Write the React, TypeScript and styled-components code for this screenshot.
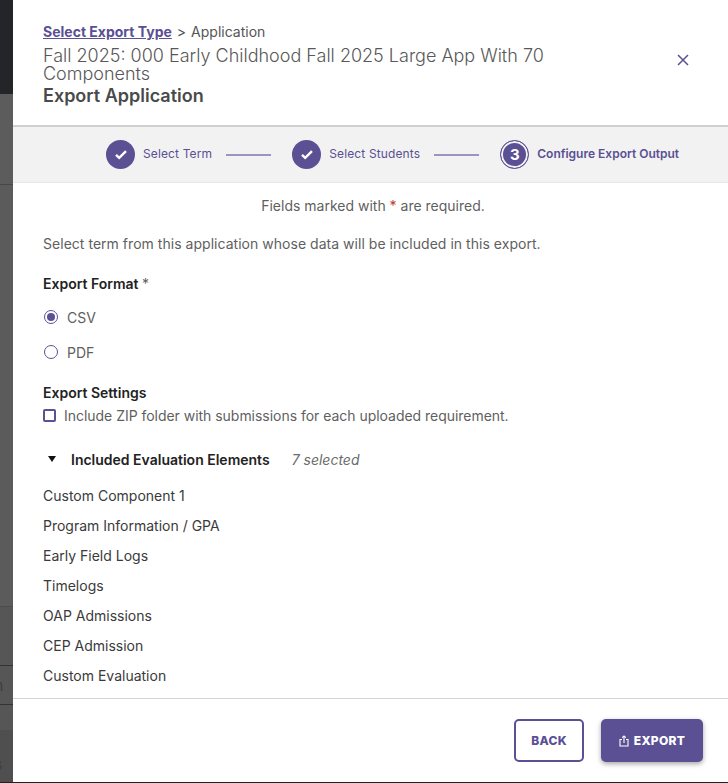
import React from "react";
import styled, { createGlobalStyle } from "styled-components";

const Global = createGlobalStyle`
  html, body { margin: 0; padding: 0; background: #fff; }
  body { font-family: Inter, "Liberation Sans", sans-serif; }
  * { box-sizing: border-box; }
`;
const purple = "#5a5093";
const grey = "#5f5f5f";

const Page = styled.div`
  display: flex; width: 728px; height: 783px; overflow: hidden;
`;
const Strip = styled.div`
  width: 13px; flex: none; display: flex; flex-direction: column; overflow: hidden;
`;
const StripBand = styled.div<{ $h: number; $bg: string; $line?: string; $pad?: number }>`
  height: ${(p) => p.$h}px; flex: none; background: ${(p) => p.$bg};
  border-bottom: ${(p) => (p.$line ? `1px solid ${p.$line}` : "none")};
  padding-top: ${(p) => p.$pad ?? 0}px;
  color: #3f3f48; font-size: 16px; line-height: ${(p) => p.$h - (p.$pad ?? 0)}px; text-indent: -6px; white-space: nowrap;
`;
const Modal = styled.div`
  flex: 1; height: 783px; background: #fff; display: flex; flex-direction: column;
  border-bottom: 1px solid #222;
`;
const Header = styled.header`
  height: 127px; flex: none; padding: 23px 30px 0; display: flex; align-items: flex-start;
  justify-content: space-between; border-bottom: 2px solid #d0d0d0;
`;
const HeaderText = styled.div` width: 560px; `;
const Crumbs = styled.div`
  font-size: 14px; line-height: 18px; color: #555; display: flex; gap: 5px; align-items: baseline;
`;
const CrumbLink = styled.a`
  color: ${purple}; font-weight: 700; text-decoration: underline;
`;
const Term = styled.div`
  font-size: 18px; font-weight: 300; line-height: 18px; color: #585858; margin-top: 6px;
`;
const Title = styled.h1`
  margin: 1px 0 0; font-size: 18px; font-weight: 600; line-height: 24px; color: #4a4a4a;
`;
const Close = styled.button`
  border: 0; background: none; padding: 0; width: 14px; height: 14px; margin: 30px 8px 0 0; display: flex;
`;
const Stepper = styled.nav`
  height: 56px; flex: none; background: #f2f2f2; border-bottom: 1px solid #e6e6e6;
  display: flex; align-items: center; padding-left: 93px;
`;
const Badge = styled.span<{ $current?: boolean }>`
  width: 29px; height: 29px; border-radius: 50%; flex: none; background: ${purple}; color: #fff;
  display: flex; align-items: center; justify-content: center; font-size: 15px; font-weight: 700;
  ${(p) => p.$current && `box-shadow: inset 0 0 0 2px #f2f2f2; border: 1px solid ${purple};`}
`;
const StepLabel = styled.span<{ $current?: boolean }>`
  margin: 0 0 1px 8px; font-size: 12px; line-height: 16px; color: ${purple}; white-space: nowrap;
  font-weight: ${(p) => (p.$current ? 600 : 400)};
  letter-spacing: ${(p) => (p.$current ? "0" : "0.13px")};
`;
const Connector = styled.span`
  width: 45px; height: 2px; background: #9c95c2; margin: 0 21px 0 14px; flex: none;
`;
const Body = styled.main`
  flex: 1; padding: 14px 30px 0; color: ${grey}; display: flex; flex-direction: column;
`;
const Notice = styled.p`
  margin: 0; padding-left: 5px; text-align: center; font-size: 14px; line-height: 18px;
`;
const Star = styled.span` color: #c0392b; `;
const Intro = styled.p`
  margin: 20px 0 0; font-size: 14px; line-height: 18px; letter-spacing: 0.03px;
`;
const FieldLabel = styled.div<{ $top: number }>`
  margin-top: ${(p) => p.$top}px; font-size: 14px; font-weight: 600; line-height: 18px; color: #222;
`;
const Muted = styled.span` font-weight: 400; color: ${grey}; `;
const RadioRow = styled.label<{ $top: number }>`
  display: flex; align-items: center; gap: 9px; margin-top: ${(p) => p.$top}px; height: 18px;
  font-size: 14px; color: ${grey}; padding-left: 1px;
`;
const RadioMark = styled.span<{ $on?: boolean }>`
  width: 14px; height: 14px; border-radius: 50%; border: 1.5px solid ${purple}; display: flex;
  align-items: center; justify-content: center; flex: none;
  &::after { content: ""; width: 8px; height: 8px; border-radius: 50%; background: ${(p) => (p.$on ? purple : "transparent")}; }
`;
const CheckRow = styled.label`
  display: flex; align-items: center; gap: 8px; margin-top: 4px; height: 18px; font-size: 14px; color: ${grey};
  letter-spacing: -0.03px;
`;
const CheckMark = styled.span`
  width: 13px; height: 13px; border: 2px solid ${purple}; border-radius: 2px; flex: none;
`;
const Summary = styled.div`
  display: flex; align-items: center; margin-top: 26px; height: 18px; padding-left: 5px;
`;
const Caret = styled.span`
  width: 0; height: 0; border-left: 4px solid transparent; border-right: 4px solid transparent;
  border-top: 6px solid #111; margin-right: 15px;
`;
const SummaryTitle = styled.span` font-size: 14px; font-weight: 600; color: #222; `;
const Count = styled.span` margin-left: 22px; font-size: 14px; font-style: italic; color: #6b6b6b; `;
const Elements = styled.ul`
  list-style: none; margin: 19px 0 0; padding: 0; display: flex; flex-direction: column; gap: 12px;
`;
const ElementItem = styled.li` font-size: 14px; line-height: 18px; color: #3a3a3a; `;
const Footer = styled.footer`
  height: 84px; flex: none; border-top: 1px solid #d4d4d4; display: flex; justify-content: flex-end;
  gap: 17px; padding: 20px 25px 0 0;
`;
const ButtonBase = styled.button`
  height: 43px; border-radius: 5px; font-family: inherit; font-size: 12px; font-weight: 800; letter-spacing: 0.3px;
  display: flex; align-items: center; justify-content: center; gap: 5px; padding: 0;
`;
const BackButton = styled(ButtonBase)`
  width: 70px; background: #fff; color: ${purple}; border: 2px solid ${purple};
`;
const ExportButton = styled(ButtonBase)`
  width: 102px; background: ${purple}; color: #fff; border: 0; box-shadow: 0 2px 5px rgba(0,0,0,.35);
`;

const Check = () => (
  <svg width="14" height="11" viewBox="0 0 14 11" fill="none">
    <path d="M2 5.8 5.2 8.8 12 2.2" stroke="#fff" strokeWidth="2.4" />
  </svg>
);
const items = ["Custom Component 1", "Program Information / GPA", "Early Field Logs", "Timelogs", "OAP Admissions", "CEP Admission", "Custom Evaluation"];

export default function App() {
  return (
    <Page>
      <Global />
      <Strip>
        <StripBand $h={94} $bg="#232529" />
        <StripBand $h={91} $bg="#5c5c5c" $line="#474747" />
        <StripBand $h={422} $bg="#5b5b5b" $line="#4d4d4d" />
        <StripBand $h={59} $bg="#565656" $line="#333" />
        <StripBand $h={39} $bg="#565656" $line="#333">n</StripBand>
        <StripBand $h={25} $bg="#565656" />
        <StripBand $h={52} $bg="#4f4f4f" $pad={16}>s</StripBand>
        <StripBand $h={1} $bg="#222" />
      </Strip>
      <Modal>
        <Header>
          <HeaderText>
            <Crumbs><CrumbLink>Select Export Type</CrumbLink><span>&gt;</span><span>Application</span></Crumbs>
            <Term>Fall 2025: 000 Early Childhood Fall 2025 Large App With 70 Components</Term>
            <Title>Export Application</Title>
          </HeaderText>
          <Close aria-label="Close">
            <svg width="14" height="14" viewBox="0 0 14 14" fill="none">
              <path d="M2 2 12 12M12 2 2 12" stroke={purple} strokeWidth="1.5" />
            </svg>
          </Close>
        </Header>
        <Stepper>
          <Badge><Check /></Badge><StepLabel>Select Term</StepLabel><Connector />
          <Badge><Check /></Badge><StepLabel>Select Students</StepLabel><Connector />
          <Badge $current>3</Badge><StepLabel $current>Configure Export Output</StepLabel>
        </Stepper>
        <Body>
          <Notice>Fields marked with <Star>*</Star> are required.</Notice>
          <Intro>Select term from this application whose data will be included in this export.</Intro>
          <FieldLabel $top={22}>Export Format <Muted>*</Muted></FieldLabel>
          <RadioRow $top={15}><RadioMark $on />CSV</RadioRow>
          <RadioRow $top={17}><RadioMark />PDF</RadioRow>
          <FieldLabel $top={23}>Export Settings</FieldLabel>
          <CheckRow><CheckMark />Include ZIP folder with submissions for each uploaded requirement.</CheckRow>
          <Summary><Caret /><SummaryTitle>Included Evaluation Elements</SummaryTitle><Count>7 selected</Count></Summary>
          <Elements>{items.map((t) => <ElementItem key={t}>{t}</ElementItem>)}</Elements>
        </Body>
        <Footer>
          <BackButton>BACK</BackButton>
          <ExportButton>
            <svg width="10" height="12" viewBox="0 0 10 12" fill="none" stroke="#fff" strokeWidth="1.1">
              <path d="M3 4.5H1v6.5h8V4.5H7M5 8V1M3.2 2.6 5 .9l1.8 1.7" />
            </svg>
            EXPORT
          </ExportButton>
        </Footer>
      </Modal>
    </Page>
  );
}
